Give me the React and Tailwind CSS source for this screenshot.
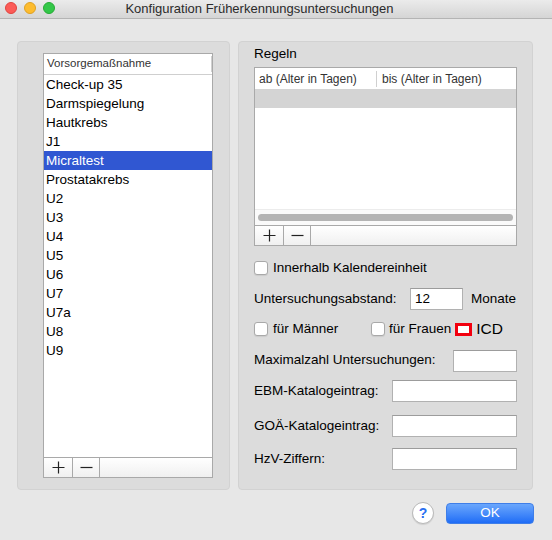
import React from 'react';

const items = [
  'Check-up 35', 'Darmspiegelung', 'Hautkrebs', 'J1', 'Micraltest', 'Prostatakrebs',
  'U2', 'U3', 'U4', 'U5', 'U6', 'U7', 'U7a', 'U8', 'U9',
];

const font = { fontFamily: '"Liberation Sans", Arial, sans-serif' };

function Checkbox() {
  return <span className="w-[14px] h-[14px] shrink-0 rounded-[3px] border border-[#a9a9a9] bg-white shadow-[0_1px_1px_rgba(0,0,0,0.08)]" />;
}

function Input({ className = '', value = '' }) {
  return (
    <div className={`h-[22px] bg-white border border-[#b1b1b1] border-t-[#9c9c9c] flex items-center px-[4px] text-[13.5px] text-black ${className}`}>
      {value}
    </div>
  );
}

// + / - footer used under both tables
function PlusMinus({ plusW, minusW }) {
  return (
    <div className="h-[20px] flex border-t border-[#a9a9a9] bg-gradient-to-b from-white to-[#f0f0f0]">
      <div className={`${plusW} flex items-center justify-center border-r border-[#a9a9a9]`}>
        <svg width="13" height="13" viewBox="0 0 13 13"><path d="M6.5 0.5v12M0.5 6.5h12" stroke="#222" strokeWidth="1.2" /></svg>
      </div>
      <div className={`${minusW} flex items-center justify-center border-r border-[#a9a9a9]`}>
        <svg width="13" height="13" viewBox="0 0 13 13"><path d="M0.5 6.5h12" stroke="#222" strokeWidth="1.2" /></svg>
      </div>
      <div className="flex-1" />
    </div>
  );
}

export default function App() {
  return (
    <div className="w-[552px] h-[540px] bg-[#e7e7e7] flex flex-col overflow-hidden text-[#1a1a1a]" style={font}>
      {/* Title bar */}
      <div className="h-[19px] shrink-0 relative flex items-center justify-center bg-gradient-to-b from-[#ebebeb] to-[#d5d5d5] border-b border-[#b4b4b4]">
        <div className="absolute left-[5px] top-[2px] flex gap-[7px]">
          <span className="w-[12px] h-[12px] rounded-full bg-[#fc5b57] border border-[#e0443e]" />
          <span className="w-[12px] h-[12px] rounded-full bg-[#fdbc2e] border border-[#dea123]" />
          <span className="w-[12px] h-[12px] rounded-full bg-[#33c748] border border-[#27aa35]" />
        </div>
        <span className="text-[13px] text-[#2b2b2b] ml-[-33px]">Konfiguration Früherkennungsuntersuchungen</span>
      </div>

      <div className="flex gap-[8px] pl-[17px] pt-[22px]">
        {/* Left group */}
        <div className="w-[213px] h-[449px] rounded-[4px] bg-[#dcdcdc] border border-[#d2d2d2] pl-[25px] pr-[16px] pt-[11px] pb-[11px] flex">
          <div className="flex-1 flex flex-col bg-white border border-[#a9a9a9]">
            <div className="h-[21px] flex items-center border-b border-[#cfcfcf] pl-[3px]">
              <span className="flex-1 text-[11.5px] text-[#333]">Vorsorgemaßnahme</span>
              <span className="w-px h-[16px] bg-[#d0d0d0]" />
            </div>
            <div className="flex-1 flex flex-col">
              {items.map((it) => (
                <div
                  key={it}
                  className={`h-[19px] flex items-center pl-[2px] pt-[2px] text-[13.5px] ${it === 'Micraltest' ? 'bg-[#3057d2] text-white' : 'text-black'}`}
                >
                  {it}
                </div>
              ))}
            </div>
            <PlusMinus plusW="w-[29px]" minusW="w-[27px]" />
          </div>
        </div>

        {/* Right group */}
        <div className="w-[295px] h-[449px] rounded-[4px] bg-[#dcdcdc] border border-[#d2d2d2] pl-[15px] pr-[15px] flex flex-col">
          <div className="h-[25px] flex items-center text-[13.5px] text-black">Regeln</div>
          <div className="h-[179px] flex flex-col bg-white border border-[#a9a9a9]">
            <div className="h-[21px] flex items-center text-[12px] text-[#333]">
              <span className="w-[122px] pl-[4px] border-r border-[#d0d0d0] h-[16px] flex items-center">ab (Alter in Tagen)</span>
              <span className="pl-[5px]">bis (Alter in Tagen)</span>
            </div>
            <div className="h-[19px] bg-[#d4d4d4]" />
            <div className="flex-1" />
            <div className="h-[16px] bg-[#fafafa] border-t border-[#ececec] flex items-center px-[3px]">
              <div className="flex-1 h-[7px] rounded-full bg-[#b4b4b4]" />
            </div>
            <PlusMinus plusW="w-[29px]" minusW="w-[27px]" />
          </div>

          <div className="mt-[13px] h-[18px] flex items-center gap-[5px] text-[13.5px] text-black">
            <Checkbox />
            <span>Innerhalb Kalendereinheit</span>
          </div>

          <div className="mt-[11px] h-[22px] flex items-center text-[13.5px] text-black">
            <span className="w-[156px]">Untersuchungsabstand:</span>
            <Input className="w-[53px]" value="12" />
            <span className="ml-[8px]">Monate</span>
          </div>

          <div className="mt-[11px] h-[16px] flex items-center text-[13.5px] text-black">
            <Checkbox />
            <span className="ml-[5px] w-[98px]">für Männer</span>
            <Checkbox />
            <span className="ml-[4px]">für Frauen</span>
            <span className="ml-[4px] w-[17px] h-[13px] border-[3px] border-[#f2000f] bg-white" />
            <span className="ml-[4px] text-[15.5px]">ICD</span>
          </div>

          <div className="mt-[13px] h-[21px] flex items-center justify-between text-[13.5px] text-black">
            <span>Maximalzahl Untersuchungen:</span>
            <Input className="w-[64px] h-[21px]" />
          </div>

          <div className="mt-[9px] h-[22px] flex items-center justify-between text-[13.5px] text-black">
            <span>EBM-Katalogeintrag:</span>
            <Input className="w-[125px]" />
          </div>

          <div className="mt-[13px] h-[22px] flex items-center justify-between text-[13.5px] text-black">
            <span>GOÄ-Katalogeintrag:</span>
            <Input className="w-[125px]" />
          </div>

          <div className="mt-[11px] h-[22px] flex items-center justify-between text-[13.5px] text-black">
            <span>HzV-Ziffern:</span>
            <Input className="w-[125px]" />
          </div>
        </div>
      </div>

      {/* Bottom buttons */}
      <div className="flex items-center justify-end pr-[18px] mt-[12px] gap-[12px]">
        <div className="w-[22px] h-[22px] rounded-full bg-white border border-[#b9b9b9] shadow-[0_1px_1px_rgba(0,0,0,0.1)] flex items-center justify-center text-[14px] font-bold text-[#2a6ff0]">
          ?
        </div>
        <div className="w-[88px] h-[21px] rounded-[4px] bg-gradient-to-b from-[#6aa6fc] to-[#1e6cf6] border border-[#3f7ee8] flex items-center justify-center text-[13.5px] text-white">
          OK
        </div>
      </div>
    </div>
  );
}
